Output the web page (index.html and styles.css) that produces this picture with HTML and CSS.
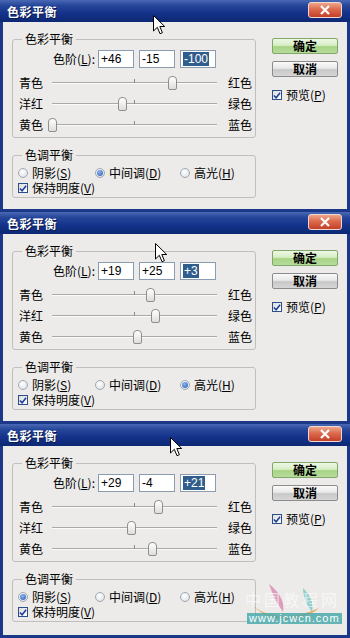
FILE: index.html
```html
<!DOCTYPE html>
<html lang="zh-CN">
<head>
<meta charset="utf-8">
<title>色彩平衡</title>
<link rel="stylesheet" href="styles.css">
</head>
<body>
<div class="stack">

  <!-- Dialog 1 -->
  <div class="dlg">
    <div class="titlebar"><span class="title">色彩平衡</span><span class="close"><svg width="12" height="10" viewBox="0 0 12 10"><path d="M2 1 L10 9 M10 1 L2 9" stroke="#fff" stroke-width="2.2"/></svg></span></div>
    <div class="body">
      <div class="left">
        <fieldset class="group g1">
          <legend>色彩平衡</legend>
          <div class="levels"><span class="lvl-label">色阶(<u>L</u>):</span><span class="inp">+46</span><span class="inp">-15</span><span class="inp"><span class="sel">-100</span></span></div>
          <div class="srow"><span class="sl">青色</span><span class="track"><span class="tick"></span><span class="thumb" style="left:120px"></span></span><span class="sr">红色</span></div>
          <div class="srow"><span class="sl">洋红</span><span class="track"><span class="tick"></span><span class="thumb" style="left:70px"></span></span><span class="sr">绿色</span></div>
          <div class="srow"><span class="sl">黄色</span><span class="track"><span class="tick"></span><span class="thumb" style="left:0px"></span></span><span class="sr">蓝色</span></div>
        </fieldset>
        <fieldset class="group g2">
          <legend>色调平衡</legend>
          <div class="radios">
            <span class="ropt w1"><span class="radio"></span>阴影(<u>S</u>)</span>
            <span class="ropt w2"><span class="radio on"></span>中间调(<u>D</u>)</span>
            <span class="ropt"><span class="radio"></span>高光(<u>H</u>)</span>
          </div>
          <div class="chkrow"><span class="chk"><svg width="9" height="9" viewBox="0 0 9 9"><path d="M1 4.5 L3.5 7 L8 1.5" stroke="#213f9a" stroke-width="1.8" fill="none"/></svg></span>保持明度(<u>V</u>)</div>
        </fieldset>
      </div>
      <div class="right">
        <div class="btn ok">确定</div>
        <div class="btn cancel">取消</div>
        <div class="chkrow preview"><span class="chk"><svg width="9" height="9" viewBox="0 0 9 9"><path d="M1 4.5 L3.5 7 L8 1.5" stroke="#213f9a" stroke-width="1.8" fill="none"/></svg></span>预览(<u>P</u>)</div>
      </div>
    </div>
    <svg class="cursor c1" width="13" height="20" viewBox="0 0 13 20"><path d="M0.5 0.5 L0.5 16 L4.3 12.3 L7 18.7 L9.4 17.7 L6.8 11.5 L11.7 11.5 Z" fill="#fff" stroke="#000" stroke-width="1"/></svg>
  </div>

  <!-- Dialog 2 -->
  <div class="dlg">
    <div class="titlebar"><span class="title">色彩平衡</span><span class="close"><svg width="12" height="10" viewBox="0 0 12 10"><path d="M2 1 L10 9 M10 1 L2 9" stroke="#fff" stroke-width="2.2"/></svg></span></div>
    <div class="body">
      <div class="left">
        <fieldset class="group g1">
          <legend>色彩平衡</legend>
          <div class="levels"><span class="lvl-label">色阶(<u>L</u>):</span><span class="inp">+19</span><span class="inp">+25</span><span class="inp"><span class="sel">+3</span></span></div>
          <div class="srow"><span class="sl">青色</span><span class="track"><span class="tick"></span><span class="thumb" style="left:98px"></span></span><span class="sr">红色</span></div>
          <div class="srow"><span class="sl">洋红</span><span class="track"><span class="tick"></span><span class="thumb" style="left:103px"></span></span><span class="sr">绿色</span></div>
          <div class="srow"><span class="sl">黄色</span><span class="track"><span class="tick"></span><span class="thumb" style="left:85px"></span></span><span class="sr">蓝色</span></div>
        </fieldset>
        <fieldset class="group g2">
          <legend>色调平衡</legend>
          <div class="radios">
            <span class="ropt w1"><span class="radio"></span>阴影(<u>S</u>)</span>
            <span class="ropt w2"><span class="radio"></span>中间调(<u>D</u>)</span>
            <span class="ropt"><span class="radio on"></span>高光(<u>H</u>)</span>
          </div>
          <div class="chkrow"><span class="chk"><svg width="9" height="9" viewBox="0 0 9 9"><path d="M1 4.5 L3.5 7 L8 1.5" stroke="#213f9a" stroke-width="1.8" fill="none"/></svg></span>保持明度(<u>V</u>)</div>
        </fieldset>
      </div>
      <div class="right">
        <div class="btn ok">确定</div>
        <div class="btn cancel">取消</div>
        <div class="chkrow preview"><span class="chk"><svg width="9" height="9" viewBox="0 0 9 9"><path d="M1 4.5 L3.5 7 L8 1.5" stroke="#213f9a" stroke-width="1.8" fill="none"/></svg></span>预览(<u>P</u>)</div>
      </div>
    </div>
    <svg class="cursor c2" width="13" height="20" viewBox="0 0 13 20"><path d="M0.5 0.5 L0.5 16 L4.3 12.3 L7 18.7 L9.4 17.7 L6.8 11.5 L11.7 11.5 Z" fill="#fff" stroke="#000" stroke-width="1"/></svg>
  </div>

  <!-- Dialog 3 -->
  <div class="dlg last">
    <div class="titlebar"><span class="title">色彩平衡</span><span class="close"><svg width="12" height="10" viewBox="0 0 12 10"><path d="M2 1 L10 9 M10 1 L2 9" stroke="#fff" stroke-width="2.2"/></svg></span></div>
    <div class="body">
      <div class="left">
        <fieldset class="group g1">
          <legend>色彩平衡</legend>
          <div class="levels"><span class="lvl-label">色阶(<u>L</u>):</span><span class="inp">+29</span><span class="inp">-4</span><span class="inp"><span class="sel">+21</span></span></div>
          <div class="srow"><span class="sl">青色</span><span class="track"><span class="tick"></span><span class="thumb" style="left:106px"></span></span><span class="sr">红色</span></div>
          <div class="srow"><span class="sl">洋红</span><span class="track"><span class="tick"></span><span class="thumb" style="left:79px"></span></span><span class="sr">绿色</span></div>
          <div class="srow"><span class="sl">黄色</span><span class="track"><span class="tick"></span><span class="thumb" style="left:100px"></span></span><span class="sr">蓝色</span></div>
        </fieldset>
        <fieldset class="group g2">
          <legend>色调平衡</legend>
          <div class="radios">
            <span class="ropt w1"><span class="radio on"></span>阴影(<u>S</u>)</span>
            <span class="ropt w2"><span class="radio"></span>中间调(<u>D</u>)</span>
            <span class="ropt"><span class="radio"></span>高光(<u>H</u>)</span>
          </div>
          <div class="chkrow"><span class="chk"><svg width="9" height="9" viewBox="0 0 9 9"><path d="M1 4.5 L3.5 7 L8 1.5" stroke="#213f9a" stroke-width="1.8" fill="none"/></svg></span>保持明度(<u>V</u>)</div>
        </fieldset>
      </div>
      <div class="right">
        <div class="btn ok">确定</div>
        <div class="btn cancel">取消</div>
        <div class="chkrow preview"><span class="chk"><svg width="9" height="9" viewBox="0 0 9 9"><path d="M1 4.5 L3.5 7 L8 1.5" stroke="#213f9a" stroke-width="1.8" fill="none"/></svg></span>预览(<u>P</u>)</div>
      </div>
    </div>
    <svg class="cursor c3" width="13" height="20" viewBox="0 0 13 20"><path d="M0.5 0.5 L0.5 16 L4.3 12.3 L7 18.7 L9.4 17.7 L6.8 11.5 L11.7 11.5 Z" fill="#fff" stroke="#000" stroke-width="1"/></svg>
    <div class="watermark">
      <svg class="wm-logo" width="90" height="44" viewBox="0 0 90 44">
        <path d="M24 2 C33 9 40 18 38 30 C33 23 28 14 24 2 Z" fill="#d98bb0" opacity="0.8"/>
        <path d="M58 6 C65 13 69 20 67 30 C62 23 58 16 58 6 Z" fill="#7cc8c4" opacity="0.8"/>
        <path d="M6 22 C20 36 48 38 74 26 C56 42 24 42 6 22 Z" fill="#e7a35c" opacity="0.85"/>
      </svg>
      <span class="wm-cn">中国教程网</span>
      <span class="wm-url">www.jcwcn.com</span>
    </div>
  </div>

</div>
</body>
</html>
```

FILE: styles.css
```css
* { box-sizing: border-box; }

html, body {
  margin: 0;
  padding: 0;
  background: #ffffff;
}

body {
  width: 350px;
  height: 638px;
  overflow: hidden;
  font-family: "Noto Sans CJK SC", "Liberation Sans", sans-serif;
  font-size: 12px;
  line-height: 14px;
  color: #000;
}

.stack {
  display: flex;
  flex-direction: column;
}

.dlg {
  position: relative;
  width: 350px;
  height: 212px;
  display: flex;
  flex-direction: column;
  background: #ecebe9;
  border-left: 3px solid #1b3888;
  border-right: 3px solid #1b3888;
  border-bottom: 3px solid #1b3888;
}

.dlg.last {
  height: 214px;
}

.titlebar {
  height: 22px;
  flex: none;
  margin: 0 -3px;
  display: flex;
  align-items: center;
  justify-content: space-between;
  padding: 1px 7px 0 7px;
  background: linear-gradient(#4a68b4 0%, #26469a 25%, #14328a 60%, #0c2874 100%);
}

.title {
  color: #fff;
  font-weight: bold;
  font-size: 12px;
  letter-spacing: 0.5px;
  text-shadow: 1px 1px 0 #0a1a4a;
}

.close {
  width: 34px;
  height: 16px;
  margin-top: -4px;
  margin-right: 1px;
  display: flex;
  align-items: center;
  justify-content: center;
  border: 1px solid #f0d8d0;
  border-radius: 3px;
  background: linear-gradient(#eea68c 0%, #dc6a4c 45%, #c2402a 100%);
}

.body {
  flex: 1;
  display: flex;
  padding-left: 9px;
}

.left {
  width: 244px;
  display: flex;
  flex-direction: column;
}

.group {
  margin: 0;
  padding: 0;
  border: 1px solid #bfbfbb;
  border-radius: 3px;
  min-width: 0;
}

.group legend {
  margin-left: 9px;
  padding: 0 3px;
  line-height: 14px;
  height: 14px;
}

.g1 {
  margin-top: 10px;
  padding-bottom: 2px;
}

.g2 {
  margin-top: 10px;
  padding-bottom: 2px;
}

.levels {
  height: 18px;
  margin-top: 4px;
  display: flex;
  align-items: center;
  padding-left: 40px;
}

.lvl-label {
  width: 45px;
}

.inp {
  width: 36px;
  height: 18px;
  margin-right: 5px;
  border: 1px solid #8c9cb0;
  background: #fff;
  padding-left: 2px;
  display: flex;
  align-items: center;
  font-family: "Liberation Sans", sans-serif;
  font-size: 12px;
}

.sel {
  background: #2f5d8c;
  color: #fff;
  padding: 0 1px;
  line-height: 14px;
}

.srow {
  height: 21px;
  display: flex;
  align-items: center;
  padding-left: 6px;
}

.levels + .srow {
  margin-top: 4px;
}

.sl {
  width: 33px;
}

.sr {
  margin-left: 11px;
}

.track {
  position: relative;
  width: 165px;
  height: 2px;
  border-top: 1px solid #a9a9a6;
  border-bottom: 1px solid #fbfbfb;
}

.tick {
  position: absolute;
  left: 82px;
  top: -4px;
  width: 1px;
  height: 4px;
  background: #8a8a88;
}

.thumb {
  position: absolute;
  top: -7px;
  width: 9px;
  height: 14px;
  margin-left: -4px;
  border: 1px solid #8e8e8c;
  border-radius: 4px 4px 2px 2px;
  background: linear-gradient(#ffffff, #deddda);
}

.radios {
  height: 14px;
  margin-top: 4px;
  display: flex;
  align-items: center;
  padding-left: 5px;
}

.ropt {
  display: flex;
  align-items: center;
}

.ropt.w1 { width: 77px; }
.ropt.w2 { width: 85px; }

.radio {
  width: 10px;
  height: 10px;
  margin-right: 4px;
  border-radius: 50%;
  border: 1px solid #a0a8b4;
  background: radial-gradient(circle at 40% 35%, #ffffff, #d8dce0);
  position: relative;
}

.radio.on::after {
  content: "";
  position: absolute;
  left: 1px;
  top: 1px;
  width: 6px;
  height: 6px;
  border-radius: 50%;
  background: radial-gradient(circle at 40% 35%, #8fb8f0, #2456b0);
}

.chkrow {
  height: 14px;
  margin-top: 1px;
  display: flex;
  align-items: center;
  padding-left: 5px;
}

.chk {
  width: 10px;
  height: 10px;
  margin-right: 4px;
  border: 1px solid #2a4f8a;
  background: linear-gradient(135deg, #dcdcd8, #ffffff);
  display: flex;
  align-items: center;
  justify-content: center;
}

.right {
  margin-left: 16px;
  padding-top: 16px;
  width: 66px;
  display: flex;
  flex-direction: column;
}

.btn {
  height: 16px;
  width: 66px;
  display: flex;
  align-items: center;
  justify-content: center;
  border-radius: 2px;
  font-weight: bold;
}

.btn.ok {
  border: 1px solid #7fa86a;
  background: linear-gradient(#eef8e6 0%, #d6eec4 45%, #a8d486 55%, #b8dc9c 100%);
}

.btn.cancel {
  margin-top: 7px;
  border: 1px solid #8c8c8c;
  background: linear-gradient(#fafafa 0%, #e8e8e8 45%, #c8c8c8 55%, #d6d6d6 100%);
}

.preview {
  margin-top: 11px;
  padding-left: 0;
}

.cursor {
  position: absolute;
}

.c1 { left: 150px; top: 15px; }
.c2 { left: 152px; top: 31px; }
.c3 { left: 167px; top: 13px; }

.watermark {
  position: absolute;
  left: 238px;
  top: 158px;
  width: 104px;
  height: 46px;
}

.wm-logo {
  position: absolute;
  left: 4px;
  top: 0;
}

.wm-cn {
  position: absolute;
  left: 4px;
  top: 10px;
  font-family: "Noto Sans CJK SC", serif;
  font-size: 16px;
  letter-spacing: 3px;
  color: rgba(255, 255, 255, 0.6);
}

.wm-url {
  position: absolute;
  left: 6px;
  top: 31px;
  padding: 0 2px;
  height: 11px;
  line-height: 11px;
  font-family: "Liberation Sans", sans-serif;
  font-size: 11px;
  letter-spacing: 1px;
  color: #fff;
  background: rgba(78, 170, 172, 0.85);
}
```
